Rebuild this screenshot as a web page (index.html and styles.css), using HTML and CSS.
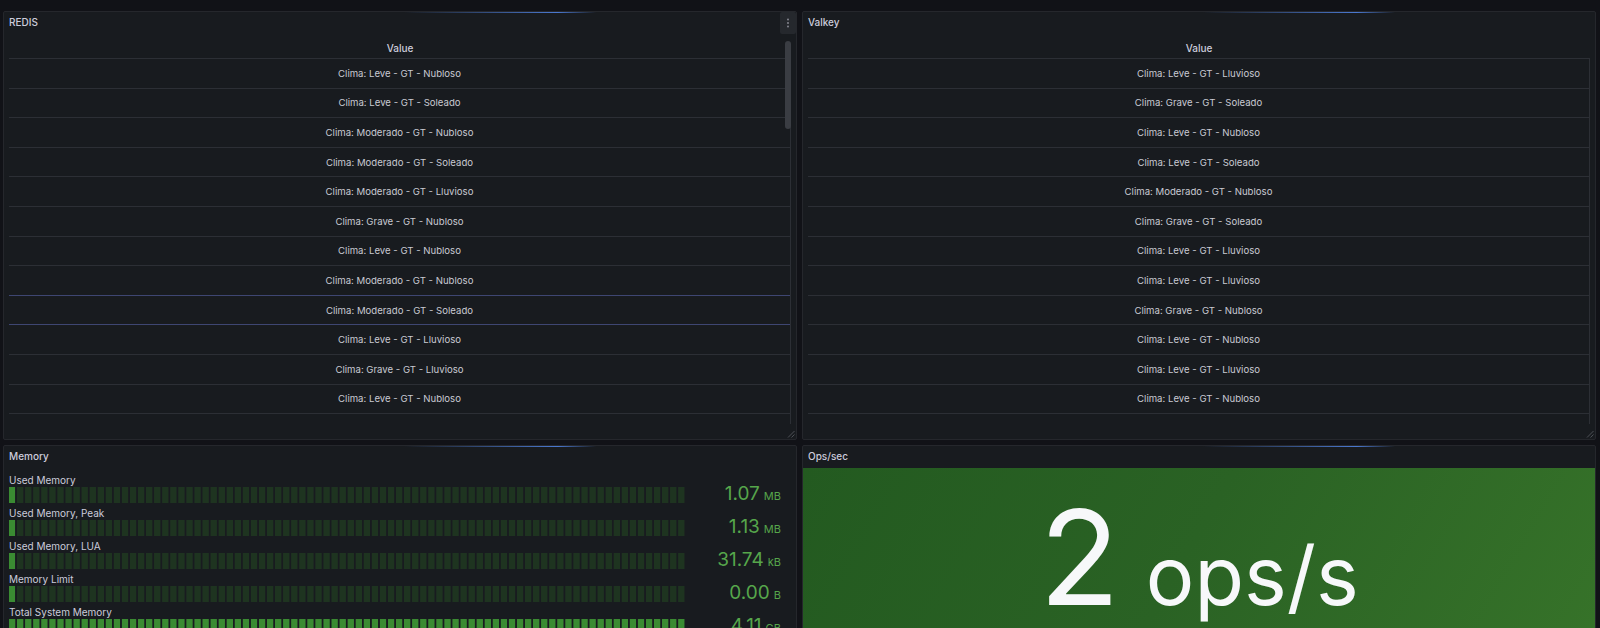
FILE: index.html
```html
<!DOCTYPE html>
<html lang="es">
<head>
<meta charset="utf-8">
<title>Dashboard</title>
<link rel="stylesheet" href="styles.css">
</head>
<body>
<div class="dash">
  <section class="panel panel-top">
    <div class="loadbar"></div>
    <header class="ph">
      <h2 class="pt">REDIS</h2>
      <button class="menu" aria-label="Menu">
        <svg width="4" height="10" viewBox="0 0 4 10"><circle cx="2" cy="1.5" r="0.9"/><circle cx="2" cy="5" r="0.9"/><circle cx="2" cy="8.5" r="0.9"/></svg>
      </button>
    </header>
    <div class="pb">
      <div class="table">
        <div class="th">Value</div>
        <div class="tbody">
          <div class="tr">Clima: Leve - GT - Nubloso</div>
          <div class="tr">Clima: Leve - GT - Soleado</div>
          <div class="tr">Clima: Moderado - GT - Nubloso</div>
          <div class="tr">Clima: Moderado - GT - Soleado</div>
          <div class="tr">Clima: Moderado - GT - Lluvioso</div>
          <div class="tr">Clima: Grave - GT - Nubloso</div>
          <div class="tr">Clima: Leve - GT - Nubloso</div>
          <div class="tr hover-prev">Clima: Moderado - GT - Nubloso</div>
          <div class="tr hover">Clima: Moderado - GT - Soleado</div>
          <div class="tr">Clima: Leve - GT - Lluvioso</div>
          <div class="tr">Clima: Grave - GT - Lluvioso</div>
          <div class="tr">Clima: Leve - GT - Nubloso</div>
        </div>
        <div class="thumb"></div>
      </div>
    </div>
    <svg class="resize" width="8" height="8" viewBox="0 0 8 8"><path d="M7.5 1 L1 7.5 M7.5 4.5 L4.5 7.5"/></svg>
  </section>

  <section class="panel panel-top">
    <div class="loadbar"></div>
    <header class="ph">
      <h2 class="pt">Valkey</h2>
    </header>
    <div class="pb">
      <div class="table">
        <div class="th">Value</div>
        <div class="tbody">
          <div class="tr">Clima: Leve - GT - Lluvioso</div>
          <div class="tr">Clima: Grave - GT - Soleado</div>
          <div class="tr">Clima: Leve - GT - Nubloso</div>
          <div class="tr">Clima: Leve - GT - Soleado</div>
          <div class="tr">Clima: Moderado - GT - Nubloso</div>
          <div class="tr">Clima: Grave - GT - Soleado</div>
          <div class="tr">Clima: Leve - GT - Lluvioso</div>
          <div class="tr">Clima: Leve - GT - Lluvioso</div>
          <div class="tr">Clima: Grave - GT - Nubloso</div>
          <div class="tr">Clima: Leve - GT - Nubloso</div>
          <div class="tr">Clima: Leve - GT - Lluvioso</div>
          <div class="tr">Clima: Leve - GT - Nubloso</div>
        </div>
      </div>
    </div>
    <svg class="resize" width="8" height="8" viewBox="0 0 8 8"><path d="M7.5 1 L1 7.5 M7.5 4.5 L4.5 7.5"/></svg>
  </section>

  <section class="panel panel-bottom">
    <div class="loadbar"></div>
    <header class="ph">
      <h2 class="pt">Memory</h2>
    </header>
    <div class="pb gauges">
      <div class="bg-row">
        <div class="bg-label">Used Memory</div>
        <div class="bg-line">
          <div class="bg-bar" style="--p:0.9%"></div>
          <div class="bg-val">1.07<span class="unit">MB</span></div>
        </div>
      </div>
      <div class="bg-row">
        <div class="bg-label">Used Memory, Peak</div>
        <div class="bg-line">
          <div class="bg-bar" style="--p:0.9%"></div>
          <div class="bg-val">1.13<span class="unit">MB</span></div>
        </div>
      </div>
      <div class="bg-row">
        <div class="bg-label">Used Memory, LUA</div>
        <div class="bg-line">
          <div class="bg-bar" style="--p:0.9%"></div>
          <div class="bg-val">31.74<span class="unit">kB</span></div>
        </div>
      </div>
      <div class="bg-row">
        <div class="bg-label">Memory Limit</div>
        <div class="bg-line">
          <div class="bg-bar" style="--p:0.9%"></div>
          <div class="bg-val">0.00<span class="unit">B</span></div>
        </div>
      </div>
      <div class="bg-row">
        <div class="bg-label">Total System Memory</div>
        <div class="bg-line">
          <div class="bg-bar" style="--p:100%"></div>
          <div class="bg-val">4.11<span class="unit">GB</span></div>
        </div>
      </div>
    </div>
  </section>

  <section class="panel panel-bottom">
    <div class="loadbar"></div>
    <header class="ph">
      <h2 class="pt">Ops/sec</h2>
    </header>
    <div class="stat">
      <span class="stat-val">2</span><span class="stat-unit">ops/s</span>
    </div>
  </section>
</div>
</body>
</html>
```

FILE: styles.css
```css
* { box-sizing: border-box; }

html, body {
  margin: 0;
  padding: 0;
  background: #111217;
  height: 628px;
  overflow: hidden;
}

body {
  font-family: Inter, "Noto Sans", sans-serif;
  color: #ccccdc;
  font-size: 10px;
}

.dash {
  display: grid;
  grid-template-columns: 794px 794px;
  grid-template-rows: 429px 320px;
  column-gap: 5px;
  row-gap: 5px;
  padding: 11px 4px 0 3px;
}

.panel {
  position: relative;
  background: #181b1f;
  border: 1px solid #25272c;
  border-radius: 2px;
  display: flex;
  flex-direction: column;
  overflow: hidden;
}

.loadbar {
  position: absolute;
  top: 0;
  left: 400px;
  width: 192px;
  height: 1px;
  background: linear-gradient(90deg, rgba(74, 120, 208, 0) 0%, #4a78d0 80%, rgba(74, 120, 208, 0) 100%);
}

.ph {
  height: 22px;
  flex: none;
  display: flex;
  align-items: flex-start;
  justify-content: space-between;
  padding-left: 5px;
}

.pt {
  margin: 0;
  font-size: 10px;
  font-weight: 500;
  line-height: 20px;
  color: #ccccdc;
}

.menu {
  width: 16px;
  height: 22px;
  border: 0;
  padding: 0;
  margin: 0;
  background: #25282d;
  border-radius: 2px;
  display: flex;
  align-items: center;
  justify-content: center;
}

.menu svg { fill: #8f909a; }

.pb {
  padding: 3px 5px 0 5px;
  flex: 1;
  min-height: 0;
}

.table {
  position: relative;
  height: 387px;
  display: flex;
  flex-direction: column;
}

.th {
  height: 22px;
  flex: none;
  border-bottom: 1px solid #2c2f35;
  display: flex;
  align-items: center;
  justify-content: center;
  font-weight: 500;
  color: #ccccdc;
}

.tbody {
  flex: 1;
  min-height: 0;
  overflow: hidden;
  border-right: 1px solid #2c2f35;
}

.tr {
  height: 29.6px;
  border-bottom: 1px solid #2c2f35;
  display: flex;
  align-items: center;
  justify-content: center;
  font-size: 9.6px;
  color: #c9cad3;
  white-space: nowrap;
}

.tr.hover-prev { border-bottom-color: #3e4672; }
.tr.hover { border-bottom-color: #3e4672; }

.thumb {
  position: absolute;
  right: 0;
  top: 4px;
  width: 6px;
  height: 88px;
  border-radius: 3px;
  background: #3a3d43;
}

.resize {
  position: absolute;
  right: 1px;
  bottom: 1px;
  stroke: #5b5e65;
  stroke-width: 0.8;
  fill: none;
}

/* Bar gauges */
.gauges {
  padding-top: 6px;
}

.bg-row {
  margin-bottom: 4px;
}

.bg-label {
  height: 13px;
  line-height: 13px;
  color: #ccccdc;
  white-space: nowrap;
}

.bg-line {
  display: flex;
  align-items: center;
  height: 16px;
}

.bg-bar {
  flex: 1;
  height: 16px;
  background:
    linear-gradient(90deg, transparent calc(100% - 2px), #181b1f 0) 0 0 / calc((100% + 2px) / 84) 100% repeat-x,
    linear-gradient(90deg, #3a8b32 var(--p), #1e3420 var(--p));
}

.bg-val {
  width: 106px;
  flex: none;
  padding-right: 10px;
  text-align: right;
  font-size: 19px;
  line-height: 16px;
  color: #56a64b;
  white-space: nowrap;
}

.unit {
  font-size: 11px;
  margin-left: 4px;
}

/* Stat */
.stat {
  flex: 1;
  background: linear-gradient(120deg, #235a20 0%, #2a6224 45%, #38752a 100%);
  display: flex;
  justify-content: center;
  align-items: baseline;
  padding-top: 23px;
  color: #f7f8fa;
  font-weight: 400;
}

.stat-val {
  font-size: 132px;
  line-height: 1;
}

.stat-unit {
  font-size: 81px;
  line-height: 1;
  margin-left: 26px;
}
```
